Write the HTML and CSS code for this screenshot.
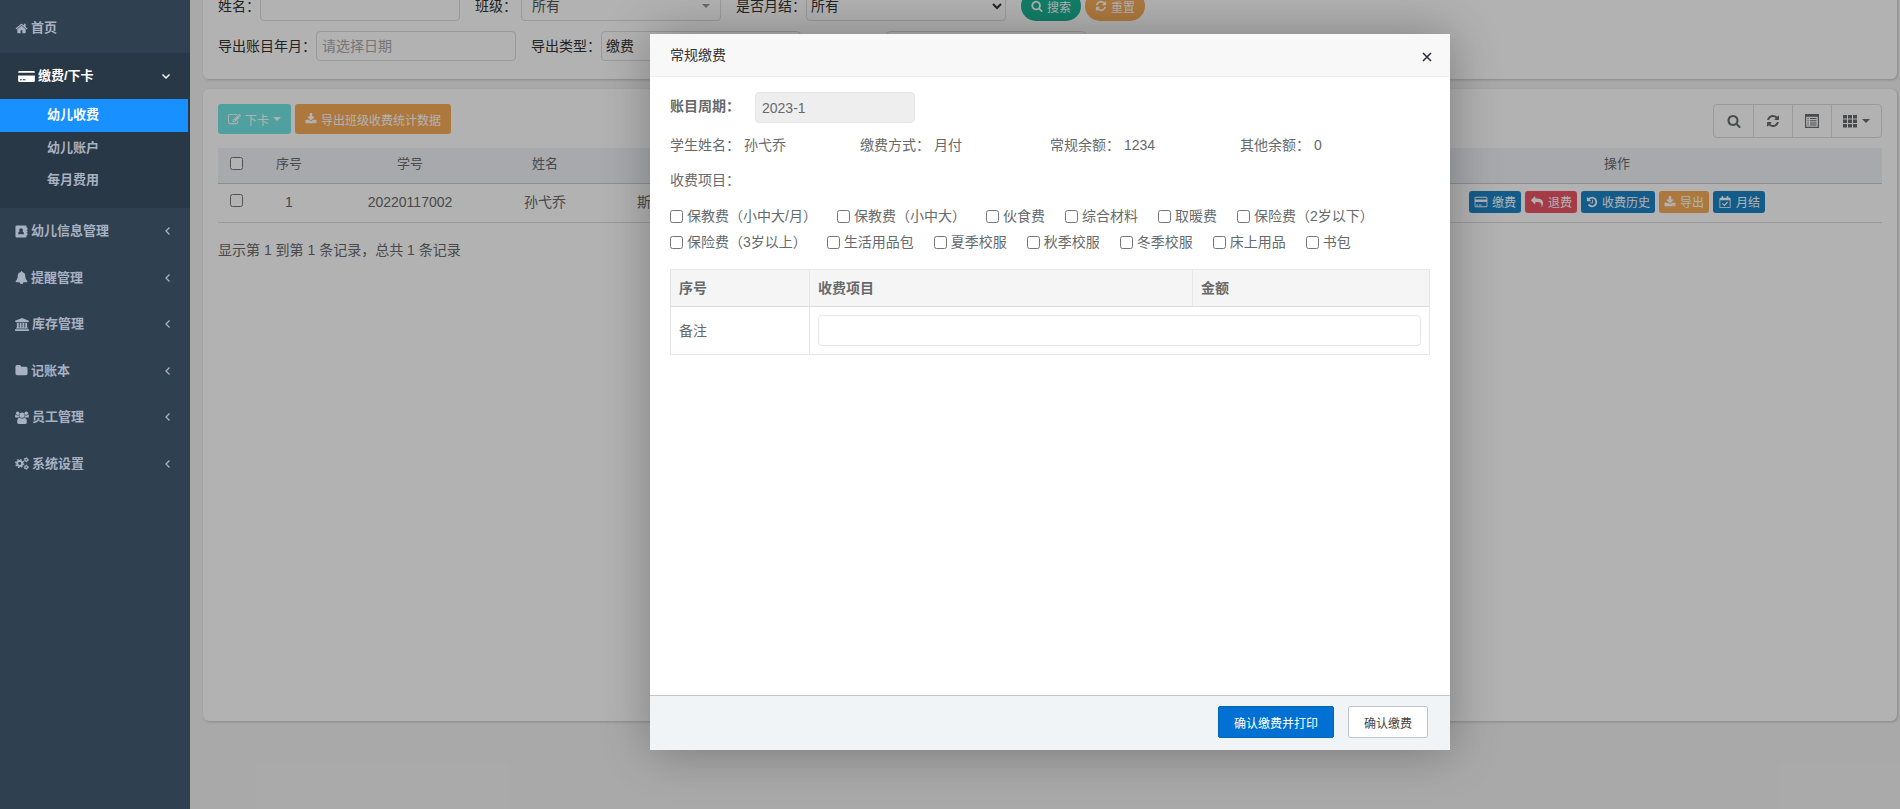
FILE: index.html
```html
<!DOCTYPE html>
<html lang="zh-CN">
<head>
<meta charset="utf-8">
<title>幼儿收费</title>
<link rel="stylesheet" href="styles.css">
</head>
<body>
<svg class="symbols" aria-hidden="true">
  <symbol id="i-home" viewBox="0 0 1792 1792"><path d="M1472 992v480q0 26-19 45t-45 19h-384v-384h-256v384h-384q-26 0-45-19t-19-45v-480q0-1 .5-3t.5-3l575-474 575 474q1 2 1 6zm223-69l-62 74q-8 9-21 11h-3q-13 0-21-7l-692-577-692 577q-12 8-24 7-13-2-21-11l-62-74q-8-10-7-23.500t11-21.500l719-599q32-26 76-26t76 26l244 204v-195q0-14 9-23t23-9h192q14 0 23 9t9 23v408l219 182q10 8 11 21.500t-7 23.500z"/></symbol>
  <symbol id="i-card-solid" viewBox="0 0 18 14"><path fill-rule="evenodd" d="M0 3V2.500Q0 1 1.500 1h15Q18 1 18 2.500V3zM0 6h18v5.500q0 1.500-1.500 1.500h-15Q0 13 0 11.500zM2 10v1h2v-1zM5 10v1h3v-1z"/></symbol>
  <symbol id="i-card" viewBox="0 0 1920 1792"><path d="M1760 128q66 0 113 47t47 113v1216q0 66-47 113t-113 47h-1600q-66 0-113-47t-47-113v-1216q0-66 47-113t113-47h1600zm-1600 128q-13 0-22.500 9.500t-9.500 22.500v224h1664v-224q0-13-9.500-22.500t-22.500-9.500h-1600zm1600 1280q13 0 22.500-9.500t9.500-22.500v-608h-1664v608q0 13 9.500 22.500t22.500 9.500h1600zm-1504-128v-128h256v128h-256zm384 0v-128h384v128h-384z"/></symbol>
  <symbol id="i-book" viewBox="0 0 13 14"><path fill-rule="evenodd" d="M1.500.5h9Q12 .5 12 2v1h1v2h-1v1h1v2h-1v1h1v2h-1v1q0 1.500-1.500 1.500h-9Q0 13.500 0 12V2Q0 .5 1.500.5zM6 3.500a2 2 0 0 0-1.500 3.300Q2.800 7.500 2.800 10h6.400q0-2.500-1.700-3.200A2 2 0 0 0 6 3.500z"/></symbol>
  <symbol id="i-bell" viewBox="0 0 1792 1792"><path d="M1728 1408q0 52-38 90t-90 38h-448q0 106-75 181t-181 75-181-75-75-181h-448q-52 0-90-38t-38-90q50-42 91-88t85-119.500 74.500-158.500 50-206 19.500-260q0-152 117-282.500t307-158.500q-8-19-8-39 0-40 28-68t68-28 68 28 28 68q0 20-8 39 190 28 307 158.500t117 282.500q0 139 19.500 260t50 206 74.500 158.500 85 119.500 91 88z"/></symbol>
  <symbol id="i-bank" viewBox="0 0 15 14"><path d="M7.500 0L15 3v1h-1v.6H1V4H0V3zM2 5.300h2v5h1v-5h2v5h1v-5h2v5h1v-5h2v5h.5q.5 0 .5.500v.6H1v-.6q0-.5.500-.5H2zM.5 12h14q.5 0 .5.500V14H0v-1.500Q0 12 .5 12z"/></symbol>
  <symbol id="i-folder" viewBox="0 0 1792 1792"><path d="M1728 608v704q0 92-66 158t-158 66h-1216q-92 0-158-66t-66-158v-960q0-92 66-158t158-66h320q92 0 158 66t66 158v32h672q92 0 158 66t66 158z"/></symbol>
  <symbol id="i-users" viewBox="0 0 15 14"><circle cx="2.900" cy="2.500" r="1.900"/><circle cx="12.100" cy="2.500" r="1.900"/><circle cx="7.500" cy="4.500" r="2.800"/><path d="M1.300 4.200q1.500 1 3 .3Q4 6.200 5 7.100H1.500Q0 7.100 0 5.800q0-1.500.6-1.900zM13.700 4.200q-1.500 1-3 .3.300 1.700-.7 2.600h3.500Q15 7.100 15 5.800q0-1.500-.6-1.900zM4.800 7.200q2.700 1.900 5.400 0Q12.700 7.500 12.700 12q0 2-2 2H4.300q-2 0-2-2 0-4.500 2.500-4.800z"/></symbol>
  <symbol id="i-cogs" viewBox="0 0 15 14"><g fill="none" stroke="currentColor"><circle cx="5" cy="7" r="2.700" stroke-width="2.200"/><circle cx="5" cy="7" r="4.200" stroke-width="1.500" stroke-dasharray="1.700 1.599"/><circle cx="12" cy="3" r="1.500" stroke-width="1.300"/><circle cx="12" cy="3" r="2.300" stroke-width="1" stroke-dasharray="1.200 1.209"/><circle cx="12" cy="11" r="1.500" stroke-width="1.300"/><circle cx="12" cy="11" r="2.300" stroke-width="1" stroke-dasharray="1.200 1.209"/></g></symbol>
  <symbol id="i-left" viewBox="0 0 10 10"><path d="M6.500 1.500L3 5l3.500 3.500" fill="none" stroke="currentColor" stroke-width="1.300"/></symbol>
  <symbol id="i-down" viewBox="0 0 10 10"><path d="M1.500 3.500L5 7l3.500-3.500" fill="none" stroke="currentColor" stroke-width="1.500"/></symbol>
  <symbol id="i-search" viewBox="0 0 1792 1792"><path d="M1216 832q0-185-131.500-316.500t-316.500-131.500-316.500 131.500-131.500 316.500 131.500 316.500 316.500 131.500 316.500-131.500 131.500-316.500zm512 832q0 52-38 90t-90 38q-54 0-90-38l-343-342q-179 124-399 124-143 0-273.500-55.500t-225-150-150-225-55.500-273.500 55.500-273.500 150-225 225-150 273.500-55.500 273.500 55.500 225 150 150 225 55.500 273.500q0 220-124 399l343 343q37 37 37 90z"/></symbol>
  <symbol id="i-refresh" viewBox="0 0 1792 1792"><path d="M1639 1056q0 5-1 7-64 268-268 434.500t-478 166.500q-146 0-282.500-55t-243.500-157l-129 129q-19 19-45 19t-45-19-19-45v-448q0-26 19-45t45-19h448q26 0 45 19t19 45-19 45l-137 137q71 66 161 102t187 36q134 0 250-65t186-179q11-17 53-117 8-23 30-23h192q13 0 22.500 9.500t9.500 22.500zm25-800v448q0 26-19 45t-45 19h-448q-26 0-45-19t-19-45 19-45l138-138q-148-137-349-137-134 0-250 65t-186 179q-11 17-53 117-8 23-30 23h-199q-13 0-22.500-9.500t-9.500-22.500v-7q65-268 270-434.500t480-166.500q146 0 284 55.500t245 156.500l130-129q19-19 45-19t45 19 19 45z"/></symbol>
  <symbol id="i-edit" viewBox="0 0 1792 1792"><path d="M888 1184l116-116-152-152-116 116v56h96v96h56zm440-720q-16-16-33 1l-350 350q-17 17-1 33t33-1l350-350q17-17 1-33zm80 594v190q0 119-84.500 203.500t-203.500 84.500h-832q-119 0-203.500-84.500t-84.500-203.500v-832q0-119 84.500-203.500t203.500-84.500h832q63 0 117 25 15 7 18 23 3 17-9 29l-49 49q-14 14-32 8-23-6-45-6h-832q-66 0-113 47t-47 113v832q0 66 47 113t113 47h832q66 0 113-47t47-113v-126q0-13 9-22l64-64q15-15 35-7t20 29zm-96-738l288 288-672 672h-288v-288zm444 132l-92 92-288-288 92-92q28-28 68-28t68 28l152 152q28 28 28 68t-28 68z"/></symbol>
  <symbol id="i-download" viewBox="0 0 1792 1792"><path d="M1344 1344q0-26-19-45t-45-19-45 19-19 45 19 45 45 19 45-19 19-45zm256 0q0-26-19-45t-45-19-45 19-19 45 19 45 45 19 45-19 19-45zm128-224v320q0 40-28 68t-68 28h-1472q-40 0-68-28t-28-68v-320q0-40 28-68t68-28h465l135 136q58 56 136 56t136-56l136-136h464q40 0 68 28t28 68zm-325-569q17 41-14 70l-448 448q-18 19-45 19t-45-19l-448-448q-31-29-14-70 17-39 59-39h256v-448q0-26 19-45t45-19h256q26 0 45 19t19 45v448h256q42 0 59 39z"/></symbol>
  <symbol id="i-reply" viewBox="0 0 1792 1792"><path d="M1792 1120q0 166-127 451-3 7-10.500 24t-13.500 30-13 22q-12 17-28 17-15 0-23.500-10t-8.500-25q0-9 2.500-26.500t2.500-23.500q5-68 5-123 0-350-190-470-160-90-520-90h-224v256q0 26-19 45t-45 19-45-19l-512-512q-19-19-19-45t19-45l512-512q19-19 45-19t45 19 19 45v256h224q713 0 875 403 53 134 53 333z"/></symbol>
  <symbol id="i-history" viewBox="0 0 1792 1792"><path d="M1664 896q0 156-61 298t-164 245-245 164-298 61q-172 0-327-72.500t-264-204.500q-7-10-6.500-22.500t8.500-20.500l137-138q10-9 25-9 16 2 23 12 73 95 179 147t225 52q104 0 198.500-40.500t163.500-109.500 109.500-163.500 40.500-198.500-40.500-198.500-109.500-163.500-163.500-109.500-198.500-40.500q-98 0-188 35.500t-160 101.500l137 138q31 30 14 69-17 40-59 40h-448q-26 0-45-19t-19-45v-448q0-42 40-59 39-17 69 14l130 129q107-101 244.500-156.500t284.500-55.500q156 0 298 61t245 164 164 245 61 298zm-640-288v448q0 14-9 23t-23 9h-320q-14 0-23-9t-9-23v-64q0-14 9-23t23-9h224v-352q0-14 9-23t23-9h64q14 0 23 9t9 23z"/></symbol>
  <symbol id="i-calendar" viewBox="0 0 14 14"><path fill-rule="evenodd" d="M1.500 2H3V1q0-1 1-1t1 1v1h4V1q0-1 1-1t1 1v1h1.500q1 0 1 1v10q0 1-1 1h-11q-1 0-1-1V3q0-1 1-1zM1.500 5v8h11V5z"/><path d="M4 8.700l2.300 2.300L10 7" fill="none" stroke="currentColor" stroke-width="1.300"/></symbol>
  <symbol id="i-list" viewBox="0 0 14 14"><path fill-rule="evenodd" d="M0 0h14v14H0zM1.200 2.800v10h11.600v-10zM2.500 4h1.200v1H2.500zM5 4h6.500v1H5zM2.500 6.200h1.200v1H2.500zM5 6.200h6.500v1H5zM2.500 8.400h1.200v1H2.500zM5 8.400h6.500v1H5zM2.500 10.600h1.200v1H2.500zM5 10.600h6.500v1H5z"/></symbol>
  <symbol id="i-grid" viewBox="0 0 14 14"><path d="M0 1h4v3.500H0zM5 1h4v3.500H5zM10 1h4v3.500h-4zM0 5.500h4V9H0zM5 5.500h4V9H5zM10 5.500h4V9h-4zM0 10h4v3.500H0zM5 10h4v3.500H5zM10 10h4v3.500h-4z"/></symbol>
  <symbol id="i-caret" viewBox="0 0 8 4"><path d="M0 0h8L4 4z"/></symbol>
  <symbol id="i-close" viewBox="0 0 10 10"><path d="M1 1l8 8M9 1L1 9" fill="none" stroke="currentColor" stroke-width="1.600"/></symbol>
</svg>
<div class="app">
  <nav class="sidebar">
    <a class="menu-item menu-home" href="#"><svg class="icon"><use href="#i-home"/></svg><span>首页</span></a>
    <div class="menu-group">
      <a class="menu-item menu-open" href="#"><svg class="icon icon-wide"><use href="#i-card-solid"/></svg><span>缴费/下卡</span><svg class="arrow"><use href="#i-down"/></svg></a>
      <ul class="submenu">
        <li><a class="sub-item sub-active" href="#">幼儿收费</a></li>
        <li><a class="sub-item" href="#">幼儿账户</a></li>
        <li><a class="sub-item" href="#">每月费用</a></li>
      </ul>
    </div>
    <a class="menu-item" href="#"><svg class="icon"><use href="#i-book"/></svg><span>幼儿信息管理</span><svg class="arrow"><use href="#i-left"/></svg></a>
    <a class="menu-item menu-tall" href="#"><svg class="icon"><use href="#i-bell"/></svg><span>提醒管理</span><svg class="arrow"><use href="#i-left"/></svg></a>
    <a class="menu-item" href="#"><svg class="icon icon-mid"><use href="#i-bank"/></svg><span>库存管理</span><svg class="arrow"><use href="#i-left"/></svg></a>
    <a class="menu-item menu-tall" href="#"><svg class="icon"><use href="#i-folder"/></svg><span>记账本</span><svg class="arrow"><use href="#i-left"/></svg></a>
    <a class="menu-item" href="#"><svg class="icon icon-mid"><use href="#i-users"/></svg><span>员工管理</span><svg class="arrow"><use href="#i-left"/></svg></a>
    <a class="menu-item menu-tall" href="#"><svg class="icon icon-mid"><use href="#i-cogs"/></svg><span>系统设置</span><svg class="arrow"><use href="#i-left"/></svg></a>
  </nav>
  <main class="main">
    <div class="page">
      <form class="card search-card">
        <div class="search-row">
          <div class="field"><label for="q-name">姓名：</label><input class="control" id="q-name" type="text"></div>
          <div class="field"><label for="q-class">班级：</label><span class="select-wrap"><select class="control control-flat" id="q-class"><option>所有</option></select><svg class="select-caret"><use href="#i-caret"/></svg></span></div>
          <div class="field"><label for="q-month">是否月结：</label><select class="control" id="q-month"><option>所有</option></select></div>
          <div class="search-actions">
            <button class="btn btn-round btn-green" type="button"><svg class="icon-sm"><use href="#i-search"/></svg>搜索</button>
            <button class="btn btn-round btn-orange" type="button"><svg class="icon-sm"><use href="#i-refresh"/></svg>重置</button>
          </div>
        </div>
        <div class="search-row">
          <div class="field"><label for="q-date">导出账目年月：</label><input class="control" id="q-date" type="text" placeholder="请选择日期"></div>
          <div class="field"><label for="q-type">导出类型：</label><select class="control" id="q-type"><option>缴费</option></select></div>
          <div class="field field-end"><select class="control" aria-label="导出方式"><option></option></select></div>
        </div>
      </form>
      <section class="card table-card">
        <div class="toolbar">
          <div class="toolbar-left">
            <button class="btn btn-teal" type="button"><svg class="icon-sm icon-edit"><use href="#i-edit"/></svg>下卡<svg class="caret"><use href="#i-caret"/></svg></button>
            <button class="btn btn-orange" type="button"><svg class="icon-sm"><use href="#i-download"/></svg>导出班级收费统计数据</button>
          </div>
          <div class="tool-group">
            <button class="tool" type="button" aria-label="搜索"><svg class="icon-tool"><use href="#i-search"/></svg></button>
            <button class="tool" type="button" aria-label="刷新"><svg class="icon-tool"><use href="#i-refresh"/></svg></button>
            <button class="tool" type="button" aria-label="视图"><svg class="icon-tool"><use href="#i-list"/></svg></button>
            <button class="tool tool-menu" type="button" aria-label="列"><svg class="icon-tool"><use href="#i-grid"/></svg><svg class="caret"><use href="#i-caret"/></svg></button>
          </div>
        </div>
        <table class="data">
          <colgroup><col class="c-check"><col class="c-no"><col class="c-id"><col class="c-name"><col><col class="c-ops"></colgroup>
          <thead><tr><th><input class="tick" type="checkbox" aria-label="全选"></th><th>序号</th><th>学号</th><th>姓名</th><th></th><th>操作</th></tr></thead>
          <tbody><tr>
            <td><input class="tick" type="checkbox" aria-label="选择"></td><td>1</td><td>20220117002</td><td>孙弋乔</td><td class="cell-class">斯</td>
            <td><div class="ops">
              <button class="btn btn-xs btn-blue" type="button"><svg class="icon-sm icon-card"><use href="#i-card"/></svg>缴费</button>
              <button class="btn btn-xs btn-red" type="button"><svg class="icon-sm icon-card"><use href="#i-reply"/></svg>退费</button>
              <button class="btn btn-xs btn-blue" type="button"><svg class="icon-sm"><use href="#i-history"/></svg>收费历史</button>
              <button class="btn btn-xs btn-orange" type="button"><svg class="icon-sm"><use href="#i-download"/></svg>导出</button>
              <button class="btn btn-xs btn-blue" type="button"><svg class="icon-sm icon-card"><use href="#i-calendar"/></svg>月结</button>
            </div></td>
          </tr></tbody>
        </table>
        <p class="summary">显示第 1 到第 1 条记录，总共 1 条记录</p>
      </section>
    </div>
    <div class="overlay">
      <div class="modal" role="dialog" aria-labelledby="modal-title">
        <header class="modal-head"><h2 id="modal-title">常规缴费</h2><button class="close" type="button" aria-label="关闭"><svg class="close-icon"><use href="#i-close"/></svg></button></header>
        <div class="modal-body">
          <div class="period"><label for="period">账目周期：</label><input class="input period-input" id="period" type="text" value="2023-1" disabled></div>
          <div class="info"><span>学生姓名： 孙弋乔</span><span>缴费方式： 月付</span><span>常规余额： 1234</span><span>其他余额： 0</span></div>
          <p class="items-title">收费项目：</p>
          <div class="items">
            <label><input class="tick" type="checkbox">保教费（小中大/月）</label>
            <label><input class="tick" type="checkbox">保教费（小中大）</label>
            <label><input class="tick" type="checkbox">伙食费</label>
            <label><input class="tick" type="checkbox">综合材料</label>
            <label><input class="tick" type="checkbox">取暖费</label>
            <label><input class="tick" type="checkbox">保险费（2岁以下）</label>
            <label><input class="tick" type="checkbox">保险费（3岁以上）</label>
            <label><input class="tick" type="checkbox">生活用品包</label>
            <label><input class="tick" type="checkbox">夏季校服</label>
            <label><input class="tick" type="checkbox">秋季校服</label>
            <label><input class="tick" type="checkbox">冬季校服</label>
            <label><input class="tick" type="checkbox">床上用品</label>
            <label><input class="tick" type="checkbox">书包</label>
          </div>
          <table class="fees">
            <colgroup><col class="f-no"><col><col class="f-sum"></colgroup>
            <thead><tr><th>序号</th><th>收费项目</th><th>金额</th></tr></thead>
            <tbody><tr><td><label for="remark">备注</label></td><td colspan="2"><input class="input" id="remark" type="text"></td></tr></tbody>
          </table>
        </div>
        <footer class="modal-foot"><button class="foot-btn foot-primary" type="button">确认缴费并打印</button><button class="foot-btn" type="button">确认缴费</button></footer>
      </div>
    </div>
  </main>
</div>
</body>
</html>
```
FILE: styles.css
```css
* { box-sizing: border-box; }
body, button, input, select { font-family: "Liberation Sans", "Noto Sans CJK SC", sans-serif; }
body { margin: 0; font-size: 14px; line-height: 20px; color: #676a6c; background: #f3f3f4; }
h2, p, ul { margin: 0; padding: 0; }
ul { list-style: none; }
svg { fill: currentColor; flex: none; }
a { text-decoration: none; color: inherit; }
.symbols { display: none; }

.app { display: flex; height: 100vh; overflow: hidden; }

/* sidebar */
.sidebar { width: 190px; flex: none; padding-top: 3px; background: #2f4050; color: #a7b1c2; font-size: 13px; font-weight: 600; }
.menu-item { display: flex; align-items: center; height: 46px; padding: 0 17px 0 15px; gap: 3px; }
.menu-tall { height: 47px; }
.menu-home { height: 50px; }
.menu-group { background: #293846; padding-bottom: 12px; }
.menu-open { color: #fff; padding: 0 19px 0 18px; }
.icon { width: 13px; height: 13px; }
.icon-mid { width: 14px; }
.icon-wide { width: 17px; }
.arrow { width: 10px; height: 10px; margin-left: auto; }
.sub-item { display: block; height: 32px; line-height: 32px; padding-left: 47px; margin-right: 2px; }
.sub-active { background: #1890ff; color: #fff; height: 33px; }

/* page */
.main { flex: 1; min-width: 0; position: relative; overflow: hidden; }
.page { height: 100%; display: flex; flex-direction: column; gap: 10px; padding: 0 3px 88px 13px; }
.card { background: #fff; border-radius: 6px; padding: 15px; box-shadow: 1px 1px 3px rgba(0, 0, 0, .2); }
.search-card { margin-top: -24px; padding-bottom: 18px; display: grid; gap: 10px; color: #333; }
.search-row { display: flex; gap: 15px; }
.field { display: flex; align-items: center; }
.field-end { width: 270px; justify-content: flex-end; }
.control { width: 200px; height: 30px; padding: 0 5px; border: 1px solid #ddd; border-radius: 4px; background: #fff; font-size: 14px; color: #333; }
select.control { padding: 0; }
.control::placeholder { color: #aaa; }
.select-wrap { position: relative; margin-left: 4px; }
select.control-flat { appearance: none; padding-left: 10px; color: #555; display: block; }
.select-caret { position: absolute; right: 11px; top: 13px; width: 8px; height: 4px; color: #999; }
.search-actions { display: flex; gap: 4px; }

.btn { display: inline-flex; align-items: center; justify-content: center; gap: 4px; height: 30px; padding: 0 10px; border: 0; border-radius: 3px; color: #fff; font-size: 12px; white-space: nowrap; }
.btn-round { width: 60px; border-radius: 15px; padding: 0; }
.btn-xs { height: 22px; padding: 0 5px; }
.btn-green { background: #1ab394; }
.btn-orange { background: #f8ac59; }
.btn-teal { background: #75e6e5; }
.btn-blue { background: #1c84c6; }
.btn-red { background: #ed5565; }
.icon-sm { width: 12px; height: 12px; }
.icon-card { width: 14px; }
.icon-edit { width: 13px; height: 13px; }
.caret { width: 8px; height: 4px; }

.table-card { flex: 1; }
.toolbar { display: flex; justify-content: space-between; align-items: flex-start; margin-bottom: 10px; }
.toolbar-left { display: flex; gap: 4px; }
.tool-group { display: flex; border: 1px solid #ddd; border-radius: 4px; }
.tool { display: flex; align-items: center; justify-content: center; gap: 5px; width: 39px; height: 32px; padding: 0; border: 0; background: none; color: #676a6c; }
.tool + .tool { border-left: 1px solid #ddd; }
.tool-menu { width: 50px; }
.icon-tool { width: 14px; height: 14px; }

.data { width: 100%; table-layout: fixed; border-collapse: collapse; text-align: center; }
.data th { height: 35px; padding: 0 0 2px; background: #eff3f8; border-bottom: 1px solid #ccc; font-size: 13px; font-weight: 400; }
.data td { height: 39px; padding: 0 0 2px; border-bottom: 1px solid #ddd; }
.c-check { width: 36px; }
.c-no { width: 70px; }
.c-id { width: 172px; }
.c-name { width: 98px; }
.c-ops { width: 530px; }
.data .cell-class { text-align: left; padding-left: 43px; }
.data .tick { display: block; margin: 0 auto 2px; }
.tick { width: 13px; height: 13px; margin: 0; }
.ops { display: flex; justify-content: center; gap: 4px; }
.summary { margin-top: 17px; }

/* dialog */
.overlay { position: absolute; inset: 0; background: rgba(0, 0, 0, .3); display: flex; justify-content: center; padding: 34px 0 59px 10px; }
.modal { width: 800px; display: flex; flex-direction: column; background: #fff; border-radius: 2px; box-shadow: 1px 1px 50px rgba(0, 0, 0, .3); }
.modal-head { display: flex; align-items: center; justify-content: space-between; height: 43px; padding: 0 15px 0 20px; background: #f8f8f8; border-bottom: 1px solid #eee; }
.modal-head h2 { font-size: 14px; font-weight: 400; color: #333; }
.close { display: flex; padding: 5px 3px 2px; border: 0; background: none; color: #2e2d3c; }
.close-icon { width: 10px; height: 10px; }
.modal-body { flex: 1; padding: 15px 20px; }
.input { width: 100%; height: 31px; padding: 0 6px; border: 1px solid #e5e6e7; border-radius: 4px; font-size: 14px; color: #676a6c; display: block; }
.period { display: flex; gap: 15px; }
.period label { font-weight: 700; line-height: 28px; }
.period .period-input { width: 160px; background: #eee; }
.info { display: grid; grid-template-columns: repeat(4, 1fr); margin-top: 12px; }
.items-title { margin-top: 15px; }
.items { display: flex; flex-wrap: wrap; column-gap: 20px; margin: 13px 0 14px; line-height: 26px; }
.items label { display: flex; align-items: center; gap: 4px; }
.fees { width: 100%; table-layout: fixed; border-collapse: collapse; text-align: left; }
.fees th, .fees td { border: 1px solid #e7e7e7; padding: 8px; }
.fees th { height: 37px; background: #f5f5f6; border-bottom-color: #ddd; }
.f-no { width: 139px; }
.f-sum { width: 237px; }
.modal-foot { display: flex; justify-content: flex-end; gap: 14px; padding: 10px 22px 12px; background: #f0f4f7; border-top: 1px solid #c7c7c7; }
.foot-btn { height: 32px; padding: 0 15px; border: 1px solid #c0c4cc; border-radius: 2px; background: #fff; color: #444; font-size: 12px; }
.foot-primary { background: #0070d2; border-color: #0864b8; color: #fff; }
```
